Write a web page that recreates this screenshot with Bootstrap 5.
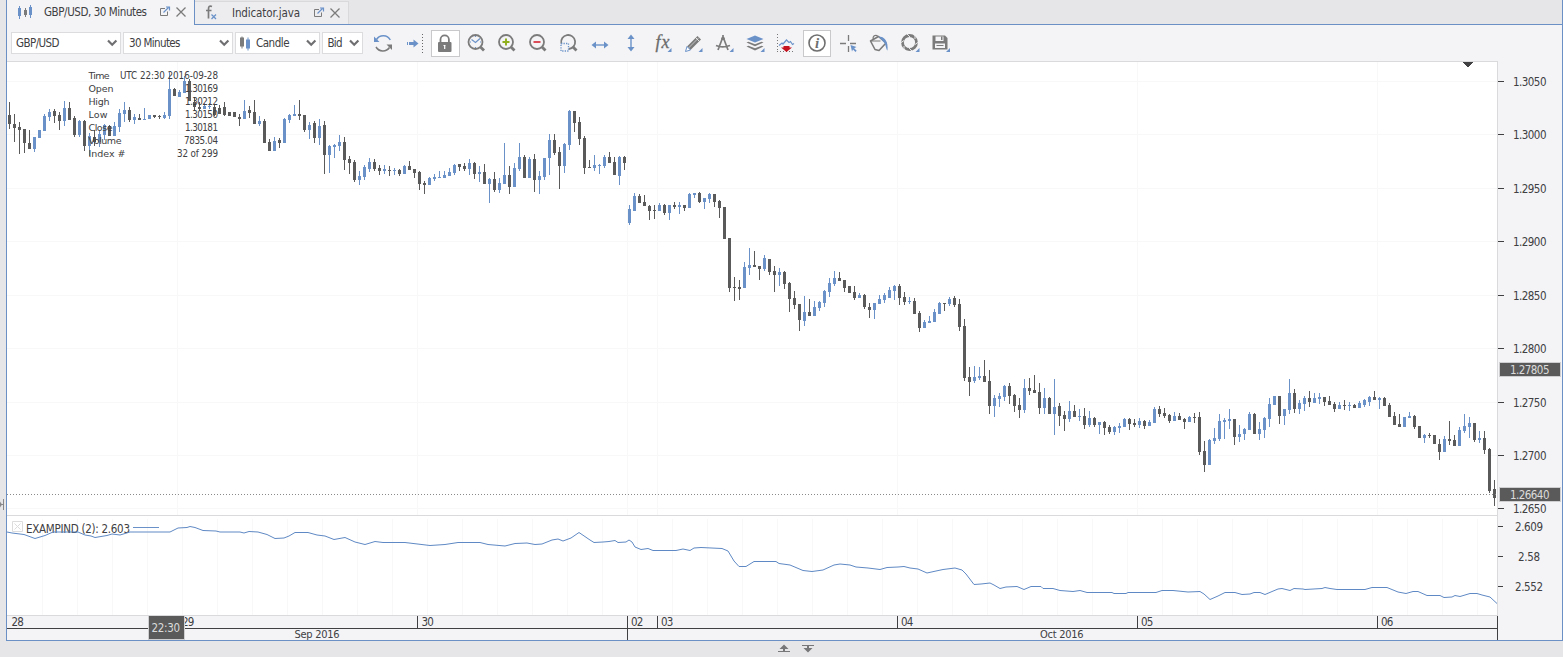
<!DOCTYPE html>
<html lang="en">
<head>
<meta charset="utf-8">
<title>GBP/USD, 30 Minutes</title>
<link href="https://cdn.jsdelivr.net/npm/bootstrap@5.3.0/dist/css/bootstrap.min.css" rel="stylesheet">
<style>
:root{--line:#6a90c6;--ink:#404042;--pane:#f4f4f7;--frame:#e6e6e9}
body{background:var(--frame);font-family:"DejaVu Sans Condensed","DejaVu Sans",sans-serif;font-size:11px;color:var(--ink);height:657px;overflow:hidden;line-height:1}
svg{display:block;flex:none}
svg text{font-family:"DejaVu Sans Condensed","DejaVu Sans",sans-serif;fill:var(--ink)}
svg text.wide{font-family:"DejaVu Sans",sans-serif}
.edge{width:6px}
.shell{width:1557px;height:641px;border:1px solid var(--line);border-top:0;background:var(--pane)}
.tabs{height:25px}
.tab-on{width:188px;border-right:1px solid var(--line)}
.tabs-rest{border-bottom:1px solid var(--line);background:var(--frame)}
.tab-off{width:154px;height:23px;background:#ededf0;border:1px solid #d9d9dc;border-left:0;border-bottom:0}
.bar{height:36px;padding-left:4px}
.pick{height:22px;background:#fff;border:1px solid #dcdcdf;padding:0 4px 0 5px;margin-right:2px;white-space:nowrap}
.pick svg{overflow:visible}
.foot{height:16px}
</style>
</head>
<body>
<div class="d-flex">
  <aside class="edge"><svg width="6" height="641"><path d="M3.500 499v11M0 504.500h3" stroke="#88888b" fill="none"/><path d="M0 501.500l2 3-2 3z" fill="#88888b"/></svg></aside>
  <main class="shell d-flex flex-column">
    <nav class="tabs d-flex">
      <div class="tab-on d-flex">
        <svg width="187" height="25" viewBox="7 0 187 25">
          <path d="M19.500 6v13M30.500 5v13" stroke="#6a92c8"/><path d="M18 8h3v8h-3zM29 7h3v8h-3z" fill="#6a92c8"/>
          <path d="M25.500 8v9" stroke="#7b7b7b"/><path d="M24 10h3v5h-3z" fill="#7b7b7b"/>
          <text x="44" y="16" font-size="11.500" textLength="103">GBP/USD, 30 Minutes</text>
          <path d="M165 8.500h-4.500v7h7V11.500" fill="none" stroke="#7b7b7b"/><path d="M163.500 12.500l5-5M166 7h3.500v3.500" fill="none" stroke="#6a92c8" stroke-width="1.200"/>
          <path d="M176.500 7.500l9 9M185.500 7.500l-9 9" stroke="#7b7b7b" stroke-width="1.300"/>
        </svg>
      </div>
      <div class="tabs-rest flex-grow-1 d-flex align-items-end">
        <div class="tab-off">
        <svg width="153" height="22" viewBox="195 2 153 22">
          <path d="M212 6.500c-2.500-1-3.500 0-3.500 2.500V18.500M206 10.500h5.500" stroke="#7b7b7b" stroke-width="1.700" fill="none"/>
          <path d="M211.500 14.500l4.500 4.500M216 14.500l-4.500 4.500" stroke="#6a92c8" stroke-width="1.300"/>
          <text x="232" y="17" font-size="11.500" textLength="68">Indicator.java</text>
          <path d="M319 9.500h-4.500v7h7V12.500" fill="none" stroke="#7b7b7b"/><path d="M317.500 13.500l5-5M320 8h3.500v3.500" fill="none" stroke="#6a92c8" stroke-width="1.200"/>
          <path d="M330.500 8.500l9 9M339.500 8.500l-9 9" stroke="#7b7b7b" stroke-width="1.300"/>
        </svg></div>
      </div>
    </nav>

    <div class="bar d-flex align-items-center">
      <div class="pick d-flex align-items-center" style="width:110px"><svg width="100" height="20"><text x="-1" y="14" font-size="11.500" textLength="43.500">GBP/USD</text><path d="M91 7.500l4.200 4.200 4.200-4.200" fill="none" stroke="#6f6f72" stroke-width="2.200"/></svg></div>
      <div class="pick d-flex align-items-center" style="width:110px"><svg width="100" height="20"><text x="0" y="14" font-size="11.500" textLength="51.500">30 Minutes</text><path d="M91 7.500l4.200 4.200 4.200-4.200" fill="none" stroke="#6f6f72" stroke-width="2.200"/></svg></div>
      <div class="pick d-flex align-items-center" style="width:85px"><svg width="75" height="20"><path d="M1 3.500v12" stroke="#7b7b7b"/><path d="M-1 4.500h4v9h-4z" fill="#7b7b7b"/><path d="M5 6.500h4v9H5z" fill="#6a92c8"/><path d="M7 4.500v13" stroke="#6a92c8"/><text x="15" y="14" font-size="11.500" textLength="33.500">Candle</text><path d="M66 7.500l4.200 4.200 4.200-4.200" fill="none" stroke="#6f6f72" stroke-width="2.200"/></svg></div>
      <div class="pick d-flex align-items-center" style="width:41px"><svg width="31" height="20"><text x="-.5" y="14" font-size="11.500" textLength="15">Bid</text><path d="M22 7.500l4.200 4.200 4.200-4.200" fill="none" stroke="#6f6f72" stroke-width="2.200"/></svg></div>

      <div class="d-flex" style="margin-left:3px">
        <svg width="31" height="30" viewBox="368 28 31 30"><path d="M376.500 39.500A8 8 0 0 1 390.300 40" fill="none" stroke="#6a92c8" stroke-width="1.500"/><path d="M374 36.500v5.500h5.500z" fill="#6a92c8"/><path d="M376 47A8 8 0 0 0 389.500 47.500" fill="none" stroke="#7b7b7b" stroke-width="1.500"/><path d="M392 50v-5.500h-5.500z" fill="#7b7b7b"/></svg>
        <svg width="31" height="30" viewBox="399 28 31 30"><path d="M407 42h1v3h-1zM409 42h4.500v-2.500l5 4-5 4V45H409z" fill="#6a92c8"/><path d="M422.500 34v19" stroke="#666" stroke-dasharray="1 2"/></svg>
        <svg width="31" height="30" viewBox="430 28 31 30"><rect x="431.500" y="30.500" width="28" height="26" fill="#fff" stroke="#c9c9cc"/><rect x="438" y="42" width="13.500" height="10" rx="1" fill="#7b7b7b"/><path d="M440.500 43v-3.500a4.200 4.200 0 0 1 8.400 0V43" fill="none" stroke="#7b7b7b" stroke-width="1.800"/><path d="M444.700 45v4M443.500 45.500h2" stroke="#fff" stroke-width="1.200"/></svg>
        <svg width="31" height="30" viewBox="461 28 31 30"><circle cx="475.500" cy="42" r="7" fill="none" stroke="#7b7b7b" stroke-width="1.800"/><path d="M480.500 47l3.500 3.500" stroke="#7b7b7b" stroke-width="2.800"/><path d="M471.500 39.500l4 3 4.500-4" fill="none" stroke="#6a92c8" stroke-width="1.200"/><path d="M475.500 36v1M475.500 47v1M470 42h1M480 42h1" stroke="#6a92c8"/></svg>
        <svg width="31" height="30" viewBox="492 28 31 30"><circle cx="506" cy="42" r="7" fill="none" stroke="#7b7b7b" stroke-width="1.800"/><path d="M511 47l3.500 3.500" stroke="#7b7b7b" stroke-width="2.800"/><path d="M502.500 42h7M506 38.500v7" stroke="#8fae1b" stroke-width="1.900"/></svg>
        <svg width="31" height="30" viewBox="523 28 31 30"><circle cx="537" cy="42" r="7" fill="none" stroke="#7b7b7b" stroke-width="1.800"/><path d="M542 47l3.500 3.500" stroke="#7b7b7b" stroke-width="2.800"/><path d="M533.500 42h7" stroke="#d8434e" stroke-width="1.900"/></svg>
        <svg width="31" height="30" viewBox="554 28 31 30"><path d="M561.300 43.500a7 7 0 1 1 7.500 5.500" fill="none" stroke="#7b7b7b" stroke-width="1.800"/><path d="M573 47l3.500 3.500" stroke="#7b7b7b" stroke-width="2.800"/><rect x="561" y="43.500" width="7.500" height="7.500" fill="none" stroke="#6a92c8" stroke-width="1.300" stroke-dasharray="1.300 1.200"/></svg>
        <svg width="31" height="30" viewBox="585 28 31 30"><path d="M595 45h10" stroke="#6a92c8" stroke-width="1.400"/><path d="M591.500 45l4.500-3.500v7zM608.500 45l-4.500-3.500v7z" fill="#6a92c8"/></svg>
        <svg width="31" height="30" viewBox="616 28 31 30"><path d="M631 37v12" stroke="#6a92c8" stroke-width="1.400"/><path d="M631 34.500l-3.500 4.500h7zM631 51.500l-3.500-4.500h7z" fill="#6a92c8"/></svg>
        <svg width="31" height="30" viewBox="647 28 31 30"><text x="655.500" y="48" font-size="18" style="font-family:'Liberation Serif',serif;font-style:italic;fill:#6b6b6b;stroke:#6b6b6b;stroke-width:.3" textLength="14">fx</text><path d="M671.500 48v4h-4z" fill="#6a92c8"/></svg>
        <svg width="31" height="30" viewBox="678 28 31 30"><path d="M687 46.500L697.500 36l3.500 3.500L690.500 50z" fill="#7b7b7b"/><path d="M688.500 48L699 37.500" stroke="#d5d5d7" stroke-width=".8"/><path d="M695.500 37.500l4 4" stroke="#eee" stroke-width=".9"/><path d="M687 46.500L685.500 51.500 690.500 50z" fill="#fff" stroke="#6a92c8" stroke-width="1"/><path d="M702.500 48v4h-4z" fill="#6a92c8"/></svg>
        <svg width="31" height="30" viewBox="709 28 31 30"><path d="M723 35v3M722.500 38L718 50M723.500 38l4.500 12M716 45.500c4 1.700 9 1.700 14 0" fill="none" stroke="#7b7b7b" stroke-width="1.700"/><circle cx="723" cy="38.500" r="1.800" fill="#7b7b7b"/><path d="M733.500 48v4h-4z" fill="#6a92c8"/></svg>
        <svg width="31" height="30" viewBox="740 28 31 30"><path d="M755 35.500l8.500 3.500-8.500 3.500-8.500-3.500z" fill="#6a92c8"/><path d="M746.500 42.500l2-.8 6.500 2.600 6.500-2.600 2 .8-8.500 3.700zM746.500 46.500l2-.8 6.500 2.600 6.500-2.600 2 .8-8.500 4z" fill="#7b7b7b"/><path d="M764.500 48v4h-4z" fill="#6a92c8"/></svg>
        <svg width="31" height="30" viewBox="771 28 31 30"><path d="M777.500 34v18M777 51.500h18" stroke="#777" stroke-dasharray="1 2"/><path d="M779 45.500l3-2.500 1 1 3.500-4 2.500 2.500 1.500-1 2 3 1.500-1" fill="none" stroke="#6a92c8" stroke-width="1.200"/><path d="M783.500 46h6v1.500h2.500L786.500 52 781 47.500h2.500z" fill="#c5141f"/></svg>
        <svg width="31" height="30" viewBox="802 28 31 30"><rect x="803.500" y="30.500" width="27" height="26" fill="#fff" stroke="#c9c9cc"/><circle cx="817" cy="43" r="8" fill="none" stroke="#6f6f6f" stroke-width="1.600"/><text x="817" y="48" text-anchor="middle" font-size="15" style="font-family:'Liberation Serif',serif;font-style:italic;font-weight:bold;fill:#6f6f6f">i</text></svg>
        <svg width="31" height="30" viewBox="833 28 31 30"><path d="M840 43.500h6M850 43.500h6M848.500 35v6M848.500 46v6" stroke="#7b7b7b" stroke-width="1.300"/><path d="M850.500 45l6 2-2.300 1.200 2.500 2.500-1.200 1.200-2.500-2.500-1 2z" fill="#6a92c8"/></svg>
        <svg width="31" height="30" viewBox="864 28 31 30"><path d="M870.500 41l8-4.500 7.500 6.500-7 7.500-4-1z" fill="none" stroke="#7b7b7b" stroke-width="1.600" stroke-linejoin="round"/><path d="M870.500 41h10M873.500 40c-1.500-4 2-6 4.500-3.500" fill="none" stroke="#7b7b7b" stroke-width="1.200"/><path d="M878.500 36.500c6 0 10 4.500 9 14-1.500-1-1.500-5-3-7.500z" fill="#6a92c8"/></svg>
        <svg width="31" height="30" viewBox="895 28 31 30"><circle cx="909.500" cy="42.500" r="7" fill="none" stroke="#7b7b7b" stroke-width="2.800"/><path d="M907 34l3 3M915 35v4M918.500 42l-3.500 2.500M912 51l-3-3M904 50v-4M900.500 43l3.500-2.500" stroke="#f4f4f7" stroke-width=".9"/><path d="M919.500 48v4h-4z" fill="#6a92c8"/></svg>
        <svg width="31" height="30" viewBox="926 28 31 30"><path d="M932.500 35.500h12.500l2.500 2.500v11.500h-15z" fill="#7b7b7b"/><path d="M935.500 36.500h8v4.500h-8zM935 43.500h10v4.500h-10z" fill="#f4f4f7"/><path d="M941 36.500h1.500v3.500H941zM936.500 45h7v1h-7z" fill="#7b7b7b"/><path d="M950 48v4h-4z" fill="#6a92c8"/></svg>
      </div>
    </div>

    <section class="d-flex">
      <svg id="price" width="1491" height="455" viewBox="7 61 1491 455" shape-rendering="crispEdges"></svg>
      <svg id="priceAxis" width="64" height="455" viewBox="1498 61 64 455"></svg>
    </section>
    <section class="d-flex">
      <svg id="study" width="1491" height="100" viewBox="7 516 1491 100"></svg>
      <svg id="studyAxis" width="64" height="100" viewBox="1498 516 64 100"></svg>
    </section>
    <svg id="timeAxis" width="1555" height="24" viewBox="7 616 1555 24"></svg>
  </main>
</div>
<footer class="foot"><svg width="1563" height="16" viewBox="0 641 1563 16"><path d="M778 651.500h12M802 645.500h12" stroke="#77777a"/><path d="M784 644.500l4.500 4.500h-9zM808 652.500l4.500-4.500h-9z" fill="#77777a"/><path d="M784 648v3M808 646v3" stroke="#77777a" stroke-width="2"/></svg></footer>

<script>
// one candle per 5px: wick top, body top, body bottom, wick bottom, u(p)/d(own)
const candles = `102,115,124,129d 114,124,128,142d 122,127,130,154d 129,129,143,153d 130,143,149,149d 137,137,149,152u 130,130,138,138u 114,116,131,131u 109,112,117,121u 109,111,116,123d
112,115,121,130d 101,108,121,126u 102,108,120,120d 116,118,135,137d 120,121,135,137u 120,121,146,151d 133,136,146,156u 130,137,142,146d 130,134,142,147u 124,125,135,140u
125,126,136,136d 122,126,136,136u 109,113,127,132u 102,110,114,122u 107,110,120,122d 114,117,120,124u 114,118,120,120d 108,119,120,120u 115,115,119,119u 115,115,117,118d
115,116,117,119d 112,115,118,119u 72,89,116,119u 88,89,96,96d 90,92,97,97u 76,81,93,93u 79,81,101,101d 97,102,107,111d 102,107,109,111d 103,106,109,109u
103,106,107,109u 105,107,115,116d 105,108,114,114d 102,107,115,116d 112,112,116,116d 112,112,117,117d 114,117,119,126d 100,111,119,119u 106,110,113,118d 100,112,124,124d
116,121,124,126u 119,121,143,143d 139,142,151,151d 137,141,151,151u 138,140,143,148d 118,119,143,143u 114,115,120,123u 105,114,116,116u 100,114,116,120d 115,115,130,132d
122,125,130,139u 121,123,138,143d 119,126,138,145u 121,125,155,174d 145,146,155,173u 144,145,147,158u 135,142,146,151u 137,142,160,170d 156,159,163,174d 160,162,180,182d
171,176,180,185u 165,167,177,180u 158,162,169,172u 159,162,169,171d 165,168,171,175d 165,169,171,174u 166,170,171,176d 168,170,171,175u 169,170,174,176d 165,166,174,174u
161,166,170,170d 169,169,173,178d 171,172,184,190d 181,183,185,194d 177,178,185,185u 174,177,179,181u 171,177,178,178u 171,175,178,178u 168,172,176,176u 164,165,173,175u
164,164,167,171d 163,166,169,171d 159,163,169,175u 162,163,174,179d 166,172,174,182u 164,172,184,184d 178,179,184,203u 172,179,190,192d 178,183,190,193u 143,175,184,184u
166,175,187,194d 163,168,187,187u 143,157,169,171u 155,157,178,178d 157,159,178,178u 154,159,180,192d 171,176,180,194u 158,158,177,180u 134,140,158,175u 134,140,153,155d
147,152,166,189d 143,144,166,173u 110,111,145,150u 111,111,123,132d 117,122,139,145d 136,138,168,174d 160,167,168,168d 155,165,168,171u 164,165,166,174u 155,157,166,168u
152,157,163,163d 157,162,175,175d 156,157,176,185u 156,157,163,170d 205,209,223,225u 193,196,211,211u 194,196,203,203d 195,202,206,206d 205,206,211,220d 205,210,211,219d
203,205,211,211u 204,205,213,215d 205,205,213,220u 202,205,207,209d 202,205,207,214u 205,205,208,211d 193,194,208,208u 193,193,195,198u 192,193,202,203d 198,198,202,209u
193,194,199,203u 194,194,202,207d 200,201,208,218d 207,207,239,239d 238,238,288,292d 277,287,288,301d 280,287,289,300d 262,267,288,288u 248,265,268,275u 251,265,267,267d
266,266,269,280d 255,258,269,271u 259,259,272,275d 266,271,275,292d 268,272,275,286u 271,272,284,289d 282,283,299,312d 291,298,305,309d 304,304,320,331d 296,312,321,326u
299,312,316,316d 301,307,316,316u 301,302,308,311u 290,291,303,307u 278,283,292,297u 271,278,284,286u 272,278,281,281d 280,280,288,292d 286,286,293,293d 286,292,298,300d
293,295,298,298u 294,295,307,309d 303,307,310,318d 303,303,310,319u 295,299,304,304u 293,295,300,303u 287,290,298,298u 285,286,291,300u 284,286,298,305d 292,297,302,305d
297,301,302,304u 298,301,314,314d 311,313,328,332d 320,322,328,328u 316,321,323,323u 309,312,322,322u 302,303,314,314u 303,303,304,311d 297,299,304,306u 296,298,305,307d
299,304,327,331d 319,326,378,381d 367,377,382,396d 366,377,381,383u 367,376,378,380u 360,376,382,382d 370,381,406,414d 395,398,406,417u 393,396,399,407u 385,386,397,401u
383,386,396,404d 394,395,406,412d 398,405,410,418d 379,388,410,413u 378,388,391,395d 375,390,393,393d 383,392,408,414d 388,398,408,414u 397,398,414,414d 379,407,414,435u
403,406,416,426d 411,415,419,431d 401,411,419,422u 405,411,417,417d 409,416,417,421u 408,416,425,429d 411,418,425,427u 417,418,425,427d 422,422,425,434u 421,422,428,435d
425,427,432,434d 426,427,432,435u 423,426,428,433u 418,419,427,427u 418,419,424,430d 419,423,425,427d 418,421,425,428u 420,421,426,429d 420,422,426,426u 407,409,423,423u
406,409,414,417d 408,413,416,418d 414,415,421,423d 412,416,421,421u 413,416,420,420d 418,419,422,429d 416,417,422,422u 413,417,418,423d 412,417,452,455d 441,451,465,472d
439,440,465,465u 428,438,441,444u 414,421,439,441u 418,420,422,439u 409,419,421,429u 419,419,437,445d 425,434,437,442u 428,429,434,440u 412,414,430,430u 413,414,434,434d
422,429,434,440u 417,418,430,438u 398,404,419,427u 396,396,405,405u 396,396,416,424d 409,409,416,425u 379,393,410,414u 389,393,409,413d 400,403,409,414u 396,398,404,411u
391,398,402,407d 393,398,403,403u 393,397,399,404u 397,397,402,406d 396,401,405,405d 402,404,409,412d 402,405,409,409u 400,405,406,410d 402,405,406,411u 404,405,408,408d
401,403,408,408u 399,400,405,407u 396,397,402,406u 391,397,400,400d 397,398,400,409u 397,398,406,406d 403,405,417,417d 412,416,425,425d 414,424,427,427d 417,417,427,427u
412,416,418,418u 415,416,427,429d 426,426,438,438d 434,435,438,443u 433,435,436,438d 435,435,444,444d 439,444,452,460d 436,439,452,452u 421,439,441,445d 435,440,446,446d
427,430,446,446u 414,426,431,433u 417,423,427,438u 423,423,440,442d 431,438,440,443u 431,438,450,454d 448,449,491,493d 480,489,498,506d`.split(/\s+/);
const $ = id => document.getElementById(id);
const rect = (x,y,w,h,f) => `<rect x="${x}" y="${y}" width="${w}" height="${h}" fill="${f}"/>`;
const text = (s,x,y,len,size=11.5,extra='') => `<text x="${x}" y="${y}" font-size="${size}" textLength="${len}" ${extra}>${s}</text>`;
const days = [177,417,627,657,897,1137,1377];
const levels = [[81,'1.3050'],[134,'1.3000'],[188,'1.2950'],[241,'1.2900'],[295,'1.2850'],[348,'1.2800'],[402,'1.2750'],[455,'1.2700'],[508,'1.2650']];

let s = rect(7,61,1491,455,'#fff');
days.forEach(x => s += rect(x,62,1,453,'#f8f8f8'));
levels.forEach(([y]) => s += rect(7,y,1490,1,'#f8f8f8'));
candles.forEach((c,i) => {
  const [h,t,b,l] = c.slice(0,-1).split(',').map(Number), x = 9+5*i, f = c.endsWith('u') ? '#6a92c8' : '#5a5a5a';
  s += rect(x,h,1,Math.max(l-h,1),f) + rect(x-1,t,3,Math.max(b-t,1),f);
});
s += `<path d="M7 494.500H1497" stroke="#8a8a8a" stroke-dasharray="1 2"/>`;
s += rect(7,61,1491,1,'#dadadc') + rect(1497,61,1,455,'#dadadc') + rect(7,515,1491,1,'#dadadc');
s += '<path d="M1463 62h10v1h-1v1h-1v1h-1v1h-1v1h-2v-1h-1v-1h-1v-1h-1v-1h-1z" fill="#404042"/>';
[['Time',21,'UTC 22:30 2016-09-28',98],['Open',25,'1.30169',33],['High',21,'1.30212',33],['Low',19,'1.30150',33],['Close',24,'1.30181',33],['Volume',33,'7835.04',34],['Index #',37,'32 of 299',41]]
  .forEach(([k,kw,v,vw],i) => { const y = 79+13*i; s += text(k,88.5,y,kw,9.5,'class="wide"') + text(v,218-vw,y,vw,9.8); });
$('price').innerHTML = s;

s = '';
levels.forEach(([y,l]) => s += rect(1498,y,6,1,'#404042') + text(l,1513,y+5,33.5));
[[363,'1.27805'],[488,'1.26640']].forEach(([y,l]) => s += rect(1499,y-1,62,15,'#cfcfd2') + rect(1500,y,60,13,'#5a5a5a') + text(l,1510,y+11,39.5,11.5,'style="fill:#dcdcdc"'));
$('priceAxis').innerHTML = s;

const curve = '7,532 12,533 24,534.5 35,538.5 45,535.5 53,532 78,532 85,535 91,536 95,537.5 107,535.5 112,534 120,535 130,532 170,532 178,528 187,527.5 190,526.5 195,527.5 203,530.5 216,531 220,532 240,532 244,533 249,531.5 258,532 267,534.5 275,538.5 284,538 289,536 295,532.5 308,532.5 317,535 325,536 334,539.5 345,537.5 355,542 365,544.5 375,541.5 383,542.5 405,542.5 430,545.5 445,544.5 458,542.5 470,542.5 480,542.5 488,544.5 505,546 515,543.5 527,543 535,544.5 542,544 552,540 558,539 563,541 571,538 579,532.5 590,540 594,542.5 603,542 609,541.5 615,540.5 618,542.5 626,542 629,540 632,542 635,547 641,549.5 648,548.5 653,550.5 676,550.5 683,549 690,550.5 694,548 701,547.5 722,548.5 728,551 734,561 739,566.5 746,566.5 754,561.5 776,561.5 779,563.5 790,565 803,570.5 812,571.5 823,570 834,565 840,564 850,565 856,567 868,568 880,569.5 887,567.5 898,567 904,566.5 910,568 918,569 927,573 936,571 943,569.5 955,568 962,570 966,574 974,584.5 981,584 990,583 994,585 1000,588.5 1006,587 1017,586.5 1024,589.5 1031,586.5 1041,586.5 1043,588.5 1053,588.5 1060,590.5 1073,591.5 1080,590.5 1087,592.5 1112,592.5 1114,593.5 1126,593.5 1128,592.5 1156,592.5 1162,590.5 1173,590.5 1188,592 1200,591.5 1204,594 1210,599.5 1218,596 1225,592.5 1235,592.5 1242,594.5 1250,594 1254,592.5 1260,592.5 1265,594.5 1278,589 1282,588.5 1290,590.5 1294,588.5 1303,589 1305,589.5 1322,588.5 1325,587.5 1330,588.5 1337,589.5 1365,589.5 1372,587.5 1387,587.5 1398,592 1406,593.5 1413,591.5 1418,591.5 1427,595.5 1440,595.5 1444,597.5 1452,597 1455,595.5 1460,596.5 1470,593.5 1477,593.5 1482,595 1490,597 1497,603.5';
s = rect(7,516,1490,99,'#fff');
for (let x = 42; x < 1497; x += 35) s += rect(x,519,1,96,'#f8f8f8');
s += '<path d="M12.500 521.500h10v10h-10zM14.500 523.500l6 6M20.500 523.500l-6 6" fill="none" stroke="#dcdcdc"/>';
s += text('EXAMPIND (2): 2.603',26,533,104) + rect(133,527,26,1,'#6a92c8');
s += `<polyline points="${curve}" fill="none" stroke="#5f89c4" stroke-width="1"/>`;
s += rect(7,615,1491,1,'#dadadc') + rect(1497,516,1,100,'#dadadc');
$('study').innerHTML = s;

s = '';
[[526,'2.609',1515,28],[556,'2.58',1518,22],[586,'2.552',1515,28]].forEach(([y,l,x,w]) => s += rect(1498,y,5,1,'#404042') + text(l,x,y+5,w));
$('studyAxis').innerHTML = s;

s = rect(7,628,1491,1,'#404042');
[417,657,897,1137,1377].forEach(x => s += rect(x,616,1,12,'#404042'));
[627,1497].forEach(x => s += rect(x,616,1,24,'#404042'));
[['28',11.5],['29',182],['30',421.5],['02',631],['03',661],['04',901],['05',1141],['06',1381]].forEach(([l,x]) => s += text(l,x,626,12.3));
s += text('Sep 2016',294.5,638,45,11) + text('Oct 2016',1040,638,43.5,11);
s += rect(148,616,37,24,'#cfcfd2') + rect(149,616,35,23,'#5a5a5a') + text('22:30',151.5,632,28.5,11.5,'style="fill:#dcdcdc"');
$('timeAxis').innerHTML = s;
</script>
<script src="https://cdn.jsdelivr.net/npm/bootstrap@5.3.0/dist/js/bootstrap.bundle.min.js"></script>
</body>
</html>
